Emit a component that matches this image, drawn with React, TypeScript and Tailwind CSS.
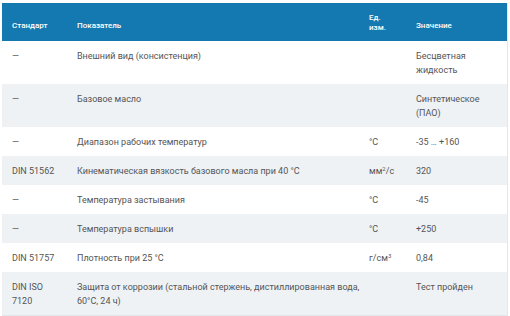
import React from 'react';

type Row = { std: string; name: string; unit: React.ReactNode; value: string };

const rows: Row[] = [
  { std: '—', name: 'Внешний вид (консистенция)', unit: '', value: 'Бесцветная жидкость' },
  { std: '—', name: 'Базовое масло', unit: '', value: 'Синтетическое (ПАО)' },
  { std: '—', name: 'Диапазон рабочих температур', unit: '°C', value: '-35 … +160' },
  {
    std: 'DIN 51562',
    name: 'Кинематическая вязкость базового масла при 40 °C',
    unit: (
      <>
        мм<sup className="text-[6px]">2</sup>/с
      </>
    ),
    value: '320',
  },
  { std: '—', name: 'Температура застывания', unit: '°C', value: '-45' },
  { std: '—', name: 'Температура вспышки', unit: '°C', value: '+250' },
  {
    std: 'DIN 51757',
    name: 'Плотность при 25 °C',
    unit: (
      <>
        г/см<sup className="text-[6px]">3</sup>
      </>
    ),
    value: '0,84',
  },
  {
    std: 'DIN ISO 7120',
    name: 'Защита от коррозии (стальной стержень, дистиллированная вода, 60°C, 24 ч)',
    unit: '',
    value: 'Тест пройден',
  },
];

export default function App() {
  return (
    <div className="w-[510px] h-[316px] bg-white pt-[3px] px-[2px]" style={{ fontFamily: 'Roboto, "Noto Sans", sans-serif' }}>
      <table className="w-[506px] table-fixed border-collapse border-b border-r border-[#e2e7eb] text-[9px] leading-[14px] text-[#555]">
        <colgroup>
          <col className="w-[65px]" />
          <col className="w-[296px]" />
          <col className="w-[43px]" />
          <col />
        </colgroup>
        <thead>
          <tr className="bg-[#1479b0] text-white text-[8px] text-left h-[38px]">
            <th className="align-bottom pl-[10px] pb-[8px] font-medium">Стандарт</th>
            <th className="align-bottom pl-[10px] pb-[8px] font-medium">Показатель</th>
            <th className="align-bottom pl-[6px] pb-[8px] font-medium leading-[10px]">
              Ед.
              <br />
              изм.
            </th>
            <th className="align-bottom pl-[10px] pb-[8px] font-medium">Значение</th>
          </tr>
        </thead>
        <tbody>
          {rows.map((r, i) => (
            <tr key={i} className={i % 2 === 1 ? 'bg-[#eef2f5]' : 'bg-white'}>
              <td className="align-top pl-[10px] pr-1 pt-[8px] pb-[7px]">{r.std}</td>
              <td className="align-top pl-[10px] pr-0 pt-[8px] pb-[7px]">{r.name}</td>
              <td className="align-top pl-[6px] pt-[8px] pb-[7px]">{r.unit}</td>
              <td className="align-top pl-[10px] pr-6 pt-[8px] pb-[7px]">{r.value}</td>
            </tr>
          ))}
        </tbody>
      </table>
    </div>
  );
}
